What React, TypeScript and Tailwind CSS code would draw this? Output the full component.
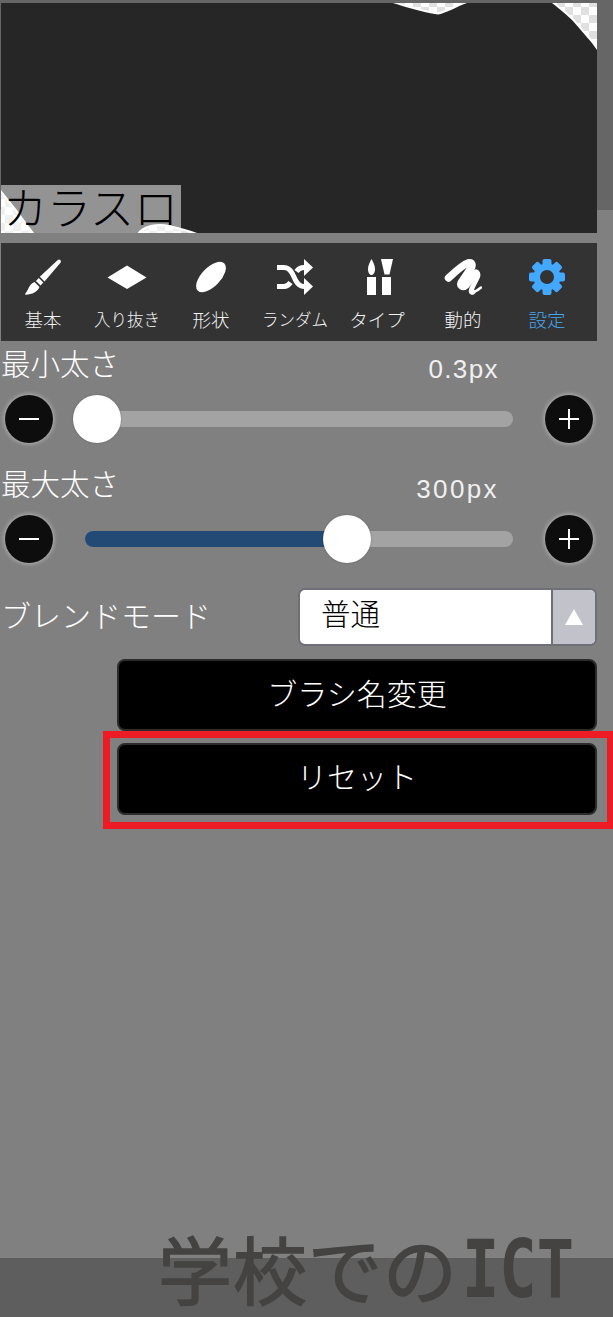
import React from "react";

const jp = "font-['Inter','Noto_Sans_CJK_JP',sans-serif]";

function Preview() {
  const d =
    "M-5 -5 L392 -5 L392 0 C405 4 420 9 437 11.5 C444 10.5 455 4 466 0 L551 0 C560 7 566 12 572 18 C582 30 590 38 596 47 L596 235 L196 235 L196 230 C188 227 178 224 168 222 C160 220 150 221 144 224 C140 226 137 228 134 235 L37 235 C30 226 24 218 16 207 L0 187 L-5 180 Z";
  return (
    <svg viewBox="0 0 596 230" className="absolute inset-0 h-full w-full" aria-hidden="true">
      <defs>
        <pattern id="chk" width="16" height="16" patternUnits="userSpaceOnUse" patternTransform="translate(4 4)">
          <rect width="16" height="16" fill="#ffffff" />
          <rect width="8" height="8" fill="#e0e0e0" />
          <rect x="8" y="8" width="8" height="8" fill="#e0e0e0" />
        </pattern>
        <filter id="soft"><feGaussianBlur stdDeviation="0.5" /></filter>
      </defs>
      <rect width="596" height="230" fill="url(#chk)" />
      <path d={d} fill="#282828" stroke="#ffffff" strokeWidth="4" paintOrder="stroke" filter="url(#soft)" />
    </svg>
  );
}

function Gear() {
  const teeth = [0, 45, 90, 135, 180, 225, 270, 315];
  return (
    <svg width="36" height="36" viewBox="0 0 36 36" aria-hidden="true">
      <circle cx="18" cy="18" r="13.5" fill="#42a9ff" />
      {teeth.map((a) => (
        <rect key={a} x="13.5" y="0" width="9" height="8" rx="2" fill="#42a9ff" transform={`rotate(${a} 18 18)`} />
      ))}
      <circle cx="18" cy="18" r="7" fill="#333333" />
    </svg>
  );
}

const icons: React.ReactNode[] = [
  <svg key="b" width="36" height="36" viewBox="0 0 36 36" aria-hidden="true">
    <path d="M32.5 1.2 C34.5 -0.6 37 2 35.3 4 L19.5 22.5 L14.8 17.8 Z" fill="#fff" />
    <path d="M13.8 19 L18.3 23.5 L15.6 26.6 L10.9 21.9 Z" fill="#fff" />
    <path d="M9.5 23 L14.5 28 C13 32.5 7 35.5 0.8 35.8 C-0.2 35.8 0 35 0.5 34.3 C3.5 31 3.8 25.5 9.5 23 Z" fill="#fff" />
  </svg>,
  <svg key="d" width="40" height="36" viewBox="0 0 40 36" aria-hidden="true">
    <polygon points="0.5,18.5 20,6.5 39.5,18.5 20,30" fill="#fff" />
  </svg>,
  <svg key="e" width="36" height="36" viewBox="0 0 36 36" aria-hidden="true">
    <ellipse cx="18" cy="18" rx="19" ry="9.5" fill="#fff" transform="rotate(-46 18 18)" />
  </svg>,
  <svg key="s" width="36" height="36" viewBox="0 0 36 36" aria-hidden="true">
    <path d="M0 8.5 H7 C11 8.5 13 10.5 15 14 L19 22 C21 25.5 23 27.5 27 27.5 H30" fill="none" stroke="#fff" strokeWidth="5" />
    <path d="M0 27.5 H7 C10 27.5 11.8 26 13.5 23.5 M19.5 12.5 C21.2 10 23 8.5 27 8.5 H30" fill="none" stroke="#fff" strokeWidth="5" />
    <polygon points="27,0 36,8.5 27,17" fill="#fff" />
    <polygon points="27,19 36,27.5 27,36" fill="#fff" />
  </svg>,
  <svg key="t" width="26" height="36" viewBox="0 0 26 36" className="ml-px" aria-hidden="true">
    <path d="M4.5 0 C6 3 8 6 8 10 C8 13.5 6.5 16 4.5 16 C2.5 16 1 13.5 1 10 C1 6 3 3 4.5 0 Z" fill="#fff" />
    <rect x="0" y="18" width="9" height="18" fill="#fff" />
    <polygon points="14,0 26,0 22.5,15.5 17.5,15.5" fill="#fff" />
    <rect x="15" y="18" width="9" height="18" fill="#fff" />
  </svg>,
  <svg key="m" width="38" height="36" viewBox="0 0 38 36" aria-hidden="true">
    <path d="M4.5 19 C10 14 18 6 24 4 C28 3 29 6 27 9 L17.5 23 C15.5 27 19 29 22 26 L29.5 15.5" fill="none" stroke="#fff" strokeWidth="7.5" strokeLinecap="round" strokeLinejoin="round" />
    <path d="M30.5 13 C33.5 12 34.5 15 33.5 18 L28.5 28 C26.5 32 27 34 29 33" fill="none" stroke="#fff" strokeWidth="5" strokeLinecap="round" strokeLinejoin="round" />
    <path d="M28.5 33 C31 33 34 31 37 28.5" fill="none" stroke="#fff" strokeWidth="2.5" strokeLinecap="round" />
  </svg>,
  <Gear key="g" />,
];

const labels = ["基本", "入り抜き", "形状", "ランダム", "タイプ", "動的", "設定"];

function Round({ plus }: { plus?: boolean }) {
  return (
    <div className="relative h-12 w-12 shrink-0 rounded-full bg-[#0d0d0d] shadow-[0_0_4px_1px_rgba(255,255,255,0.4)]">
      <div className="absolute left-[14px] top-[23px] h-[2px] w-[20px] bg-white" />
      {plus && <div className="absolute left-[23px] top-[14px] h-[20px] w-[2px] bg-white" />}
    </div>
  );
}

function Slider({ pct, showFill }: { pct: number; showFill: boolean }) {
  return (
    <div className="flex h-12 shrink-0 items-center pl-[5px] pr-5">
      <Round />
      <div className="relative mx-8 h-4 flex-1 rounded-full bg-[#a3a3a3]">
        {showFill && <div className="h-4 rounded-l-full bg-[#224a74]" style={{ width: pct }} />}
        <div
          className="absolute top-[-16px] ml-[-24px] h-12 w-12 rounded-full bg-white shadow-[0_0_2px_rgba(0,0,0,0.3)]"
          style={{ left: pct }}
        />
      </div>
      <Round plus />
    </div>
  );
}

export default function App() {
  return (
    <div className={`relative flex h-[1317px] w-[613px] flex-col overflow-hidden bg-[#808080] ${jp}`}>
      <div className="h-[210px] shrink-0 bg-[#666666] pl-px pt-[3px]">
        <div className="relative h-[230px] w-[596px]">
          <Preview />
          <div className="absolute bottom-0 left-0 flex h-[48px] w-[180px] items-center whitespace-nowrap bg-white/50 pl-[2px] text-[44px] font-light leading-[48px] text-black">
            カラスロ
          </div>
        </div>
      </div>

      <div className="ml-px mt-[33px] flex h-[98px] w-[596px] shrink-0 bg-[#333333]">
        {labels.map((l, i) => (
          <div key={l} className="flex w-[84px] flex-col items-center pt-4">
            <div className="flex h-9 items-center justify-center">{icons[i]}</div>
            <div
              className={`mt-[15px] whitespace-nowrap font-light leading-5 ${
                l.length > 3 ? "text-[16.5px]" : "text-[18.5px]"
              } ${i === 6 ? "text-[#46a6f0]" : "text-[#f2f2f2]"} ${i === 4 ? "mr-1" : ""}`}
            >
              {l}
            </div>
          </div>
        ))}
      </div>

      <div className="flex h-[54px] shrink-0 items-start justify-between pl-[1px] pr-[114px] pt-[7px]">
        <span className="text-[29.5px] font-light leading-8 text-white">最小太さ</span>
        <span className="pt-[5px] font-['Liberation_Sans',sans-serif] text-[26px] leading-8 tracking-[1.4px] text-[#f0f0f0]">0.3px</span>
      </div>
      <Slider pct={12} showFill={false} />

      <div className="flex h-[72px] shrink-0 items-start justify-between pl-[1px] pr-[114px] pt-[25px]">
        <span className="text-[29.5px] font-light leading-8 text-white">最大太さ</span>
        <span className="pt-[5px] font-['Liberation_Sans',sans-serif] text-[26px] leading-8 tracking-[2.4px] text-[#f0f0f0]">300px</span>
      </div>
      <Slider pct={262} showFill />

      <div className="mt-[25px] flex h-[58px] shrink-0 items-center pl-[1px] pr-4">
        <span className="mb-[3px] whitespace-nowrap text-[30px] font-light leading-8 text-white">ブレンドモード</span>
        <div className="ml-auto flex h-[58px] w-[299px] overflow-hidden rounded-[7px] border-2 border-[#6f6f78] bg-white">
          <div className="flex flex-1 items-center pb-[5px] pl-[21px] text-[29.5px] font-light text-black">普通</div>
          <div className="flex w-[44px] items-center justify-center border-l-2 border-[#6f6f78] bg-[#c1c2ca]">
            <svg width="18" height="16" viewBox="0 0 18 16" aria-hidden="true">
              <polygon points="9,0 18,16 0,16" fill="#fff" />
            </svg>
          </div>
        </div>
      </div>

      <div className="ml-[117px] mt-[13px] flex h-[72px] w-[480px] shrink-0 items-center justify-center rounded-[8px] border-2 border-[#2b2b2b] bg-black pb-[2px] text-[30px] font-light text-white">
        ブラシ名変更
      </div>
      <div className="relative ml-[117px] mt-[12px] flex h-[72px] w-[480px] shrink-0 items-center justify-center rounded-[8px] border-2 border-[#2b2b2b] bg-black pb-[3px] text-[30px] font-light text-white">
        リセット
        <div className="absolute bottom-[-16px] left-[-16px] right-[-18px] top-[-14px] border-[7px] border-r-[6px] border-[#ed1c24]" />
      </div>

      <div className="mt-auto h-[59px] shrink-0 bg-[#5e5e5e]" />
      <div className="absolute left-[158px] top-[1230px] flex h-[84px] items-center text-[#444342] blur-[0.7px]">
        <span className="text-[74px] font-normal leading-[84px] tracking-[1px] [-webkit-text-stroke:1.5px_#444342]">学校での</span>
        <span className="mb-[4px] ml-[4px] origin-center scale-y-[1.28] font-['DejaVu_Sans_Mono',monospace] text-[62px] font-bold leading-[72px]">ICT</span>
      </div>
    </div>
  );
}
